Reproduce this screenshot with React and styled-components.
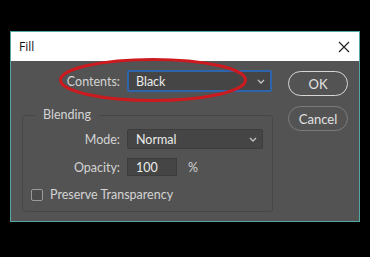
import React from 'react'
import styled, { createGlobalStyle } from 'styled-components'

const Global = createGlobalStyle`
  html, body {
    margin: 0;
    background: #000;
  }
  body {
    font-family: Lato, "Liberation Sans", sans-serif;
  }
`

const Page = styled.div`
  width: 370px;
  height: 257px;
  padding: 31px 0 0 10px;
  box-sizing: border-box;
`

const Dialog = styled.div`
  position: relative;
  width: 350px;
  height: 191px;
  box-sizing: border-box;
  border: 1px solid #52a8a3;
  background: #535353;
  display: flex;
  flex-direction: column;
`

const TitleBar = styled.div`
  height: 29px;
  background: #fff;
  display: flex;
  align-items: center;
  justify-content: space-between;
  padding: 0 9px 0 8px;
  font-family: "Open Sans", "Noto Sans", sans-serif;
  font-size: 12px;
  color: #111;
`

const Body = styled.div`
  flex: 1;
  display: flex;
  gap: 15px;
  padding: 9px 11px 0 11px;
`

const Main = styled.div`
  width: 251px;
  display: flex;
  flex-direction: column;
`

const Side = styled.div`
  display: flex;
  flex-direction: column;
  gap: 10px;
  padding-top: 1px;
`

const Row = styled.div`
  display: flex;
  align-items: center;
  gap: 7px;
  height: ${p => p.$h || 20}px;
`

const Label = styled.label`
  width: ${p => p.$w}px;
  text-align: right;
  font-size: 12.5px;
  color: #d4d4d4;
`

const Select = styled.div`
  width: ${p => p.$w}px;
  height: ${p => p.$h}px;
  box-sizing: border-box;
  background: #454545;
  border: ${p => (p.$focus ? '2px solid #2d64ac' : '1px solid #3d3d3d')};
  border-radius: 2px;
  display: flex;
  align-items: center;
  justify-content: space-between;
  padding: 0 5px 0 ${p => (p.$focus ? 7 : 8)}px;
  font-size: 12.5px;
  color: #ececec;
`

const Input = styled.div`
  width: 50px;
  height: 18px;
  box-sizing: border-box;
  background: #454545;
  border: 1px solid #3d3d3d;
  padding-left: 8px;
  display: flex;
  align-items: center;
  font-size: 12.5px;
  color: #ececec;
`

const Unit = styled.span`
  margin-left: 4px;
  font-size: 12.5px;
  color: #d4d4d4;
`

const Group = styled.fieldset`
  margin: 15px 0 0 0;
  padding: 6px 0 9px 0;
  border: 1px solid #474747;
  border-radius: 3px;
  display: flex;
  flex-direction: column;
  gap: 9px;
`

const Legend = styled.legend`
  margin-left: 12px;
  padding: 0 8px;
  font-size: 12.5px;
  line-height: 16px;
  color: #d4d4d4;
`

const CheckRow = styled.div`
  display: flex;
  align-items: center;
  gap: 7px;
  padding-left: 8px;
  margin-top: 2px;
  font-size: 12.5px;
  color: #d4d4d4;
`

const Box = styled.span`
  width: 12px;
  height: 12px;
  box-sizing: border-box;
  border: 1px solid #9a9a9a;
  border-radius: 2px;
  background: #4c4c4c;
`

const Button = styled.button`
  width: 60px;
  height: 25px;
  border-radius: 13px;
  background: #535353;
  border: 1.5px solid ${p => (p.$primary ? '#d6d6d6' : '#7c7c7c')};
  color: #e2e2e2;
  font-family: Lato, "Liberation Sans", sans-serif;
  font-size: 13px;
  padding: 0;
`

const Ring = styled.svg`
  position: absolute;
  left: 47px;
  top: 25px;
  pointer-events: none;
`

const Chevron = () => (
  <svg width="8" height="5" viewBox="0 0 8 5">
    <path d="M1 1l3 3 3-3" fill="none" stroke="#c4c4c4" strokeWidth="1.3" />
  </svg>
)

const CloseX = () => (
  <svg width="12" height="12" viewBox="0 0 12 12">
    <path d="M1 1l10 10M11 1L1 11" stroke="#222" strokeWidth="1.2" />
  </svg>
)

export default function App() {
  return (
    <Page>
      <Global />
      <Dialog>
        <TitleBar>
          <span>Fill</span>
          <CloseX />
        </TitleBar>
        <Body>
          <Main>
            <Row $h={22}>
              <Label $w={98}>Contents:</Label>
              <Select $w={145} $h={22} $focus>
                Black
                <Chevron />
              </Select>
            </Row>
            <Group>
              <Legend>Blending</Legend>
              <Row>
                <Label $w={97}>Mode:</Label>
                <Select $w={136} $h={20}>
                  Normal
                  <Chevron />
                </Select>
              </Row>
              <Row $h={18}>
                <Label $w={97}>Opacity:</Label>
                <Input>100</Input>
                <Unit>%</Unit>
              </Row>
              <CheckRow>
                <Box />
                Preserve Transparency
              </CheckRow>
            </Group>
          </Main>
          <Side>
            <Button $primary>OK</Button>
            <Button>Cancel</Button>
          </Side>
        </Body>
        <Ring width="190" height="46" viewBox="0 0 190 46">
          <ellipse cx="95" cy="23" rx="92.5" ry="20.5" fill="none" stroke="#cc1a1f" strokeWidth="3" />
        </Ring>
      </Dialog>
    </Page>
  )
}
